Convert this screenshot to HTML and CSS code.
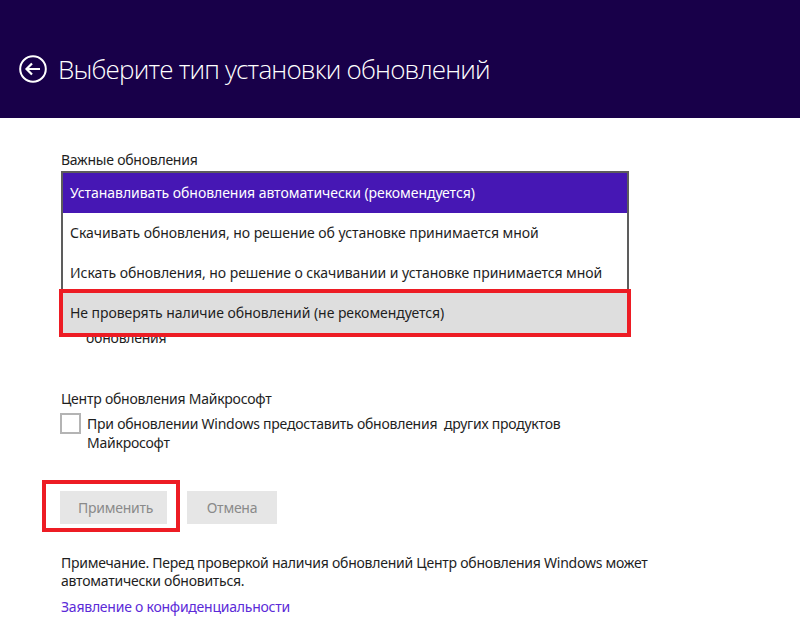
FILE: index.html
```html
<!DOCTYPE html>
<html>
<head>
  <meta charset="utf-8">
  <title>Центр обновления Windows</title>
  <link rel="stylesheet" href="styles.css">
</head>
<body>
  <header class="page-header">
    <svg class="back-icon" width="28" height="28" viewBox="0 0 28 28">
      <circle cx="14" cy="14" r="12.8" fill="none" stroke="#fff" stroke-width="2"/>
      <path d="M7.5 14 H21 M13 8.5 L7.5 14 L13 19.5" fill="none" stroke="#fff" stroke-width="2.2"/>
    </svg>
    <h1>Выберите тип установки обновлений</h1>
  </header>

  <div class="content">
    <div class="section-label">Важные обновления</div>

    <div class="dropdown">
      <!-- tail of the option text that the open list covers -->
      <div class="covered-text">обновления</div>

      <ul class="dropdown-list">
        <li class="selected">Устанавливать обновления автоматически (рекомендуется)</li>
        <li>Скачивать обновления, но решение об установке принимается мной</li>
        <li>Искать обновления, но решение о скачивании и установке принимается мной</li>
        <li class="hovered marked">Не проверять наличие обновлений (не рекомендуется)</li>
      </ul>
    </div>

    <div class="section-label ms-label">Центр обновления Майкрософт</div>
    <div class="check-row">
      <span class="checkbox"></span>
      <span class="check-text">При обновлении Windows предоставить обновления&nbsp; других продуктов<br>Майкрософт</span>
    </div>

    <div class="actions">
      <button class="btn apply">Применить</button>
      <button class="btn cancel">Отмена</button>
    </div>

    <p class="note">Примечание. Перед проверкой наличия обновлений Центр обновления Windows может<br>автоматически обновиться.</p>
    <a class="privacy" href="#">Заявление о конфиденциальности</a>
  </div>
</body>
</html>
```

FILE: styles.css
```css
:root {
  --header-bg: #180049;
  --accent: #4617b4;
  --text: #1e1e1e;
  --link: #5b2ad8;
  --btn-bg: #e6e6e6;
  --btn-text: #8a8a8a;
  --mark: #ed1c24;
}

body {
  margin: 0;
  width: 800px;
  height: 627px;
  overflow: hidden;
  font-family: "Noto Sans", "Open Sans", sans-serif;
  font-size: 14px;
  letter-spacing: -0.24px;
  color: var(--text);
  background: #fff;
}

.page-header {
  height: 118px;
  box-sizing: border-box;
  padding: 52px 0 0 19px;
  background: var(--header-bg);
  color: #fff;
  display: flex;
  align-items: flex-start;
  gap: 11px;
}

.back-icon {
  margin-top: 3px;
  flex: none;
}

.page-header h1 {
  margin: 0;
  font-family: "Open Sans", "Noto Sans", sans-serif;
  font-weight: 300;
  font-size: 26px;
  line-height: 34px;
  letter-spacing: -0.82px;
}

.content {
  padding: 32px 0 0 60px;
}

.section-label {
  line-height: 20px;
  padding-left: 1px;
}

.dropdown {
  position: relative;
  margin-top: 1px;
  padding: 157px 0 3px;
}

.covered-text {
  padding-left: 26px;
  line-height: 19px;
}

.dropdown-list {
  position: absolute;
  top: 0;
  left: 1px;
  width: 568px;
  box-sizing: border-box;
  margin: 0;
  padding: 0;
  list-style: none;
  background: #fff;
  border: 2px solid #5d5d5d;
  letter-spacing: -0.05px;
}

.dropdown-list li {
  height: 40px;
  line-height: 40px;
  padding-left: 7px;
  white-space: nowrap;
}

.dropdown-list li.selected {
  background: var(--accent);
  color: #fff;
}

.dropdown-list li.hovered {
  background: #dedede;
}

.dropdown-list li.marked {
  outline: 4px solid var(--mark);
  outline-offset: 0;
  position: relative;
}

.ms-label {
  margin-top: 39px;
}

.check-row {
  display: flex;
  align-items: flex-start;
  gap: 6px;
  margin-top: 4px;
  line-height: 19px;
}

.check-text {
  margin-top: 1px;
}

.checkbox {
  flex: none;
  width: 21px;
  height: 21px;
  box-sizing: border-box;
  border: 2px solid #b4b4b4;
}

.actions {
  display: flex;
  gap: 20px;
  margin-top: 39px;
}

.btn {
  height: 33px;
  padding: 0 18px;
  border: none;
  background: var(--btn-bg);
  color: var(--btn-text);
  font-family: inherit;
  font-size: 14px;
  letter-spacing: inherit;
}

.btn.apply {
  width: 107px;
  position: relative;
}

.btn.cancel {
  width: 90px;
}

.btn.apply::after {
  content: "";
  position: absolute;
  left: -18px;
  top: -11px;
  right: -13px;
  bottom: -8px;
  border: 4px solid var(--mark);
}

.note {
  margin: 30px 0 0 1px;
  line-height: 18px;
}

.privacy {
  display: inline-block;
  margin: 8px 0 0 1px;
  line-height: 18px;
  color: var(--link);
  text-decoration: none;
}
```
